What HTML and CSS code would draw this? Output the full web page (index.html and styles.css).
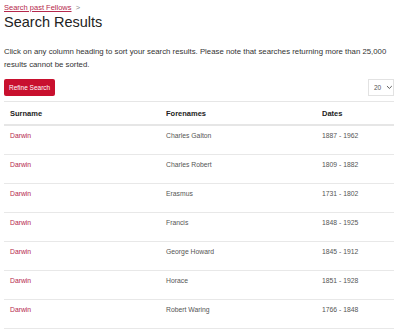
FILE: index.html
```html
<!DOCTYPE html>
<html lang="en">
<head>
    <meta charset="UTF-8">
    <meta name="viewport" content="width=device-width, initial-scale=1.0">
    <title>Search Results</title>
    <link rel="stylesheet" href="styles.css">
</head>
<body>
    <div class="page">
        <nav class="breadcrumb">
            <a href="#">Search past Fellows</a>
            <span class="sep">&gt;</span>
        </nav>
        <h1>Search Results</h1>

        <p class="intro">Click on any column heading to sort your search results. Please note that searches returning more than 25,000 results cannot be sorted.</p>

        <div class="toolbar">
            <button class="refine">Refine Search</button>
            <div class="per-page">
                <span>20</span>
                <svg width="7" height="5" viewBox="0 0 7 5"><path d="M1 1l2.5 2.5L6 1" fill="none" stroke="#555" stroke-width="1"/></svg>
            </div>
        </div>

        <table class="results">
            <thead>
                <tr>
                    <th class="col-surname">Surname</th>
                    <th class="col-forenames">Forenames</th>
                    <th class="col-dates">Dates</th>
                </tr>
            </thead>
            <tbody>
                <tr><td><a href="#">Darwin</a></td><td>Charles Galton</td><td>1887 - 1962</td></tr>
                <tr><td><a href="#">Darwin</a></td><td>Charles Robert</td><td>1809 - 1882</td></tr>
                <tr><td><a href="#">Darwin</a></td><td>Erasmus</td><td>1731 - 1802</td></tr>
                <tr><td><a href="#">Darwin</a></td><td>Francis</td><td>1848 - 1925</td></tr>
                <tr><td><a href="#">Darwin</a></td><td>George Howard</td><td>1845 - 1912</td></tr>
                <tr><td><a href="#">Darwin</a></td><td>Horace</td><td>1851 - 1928</td></tr>
                <tr><td><a href="#">Darwin</a></td><td>Robert Waring</td><td>1766 - 1848</td></tr>
            </tbody>
        </table>
    </div>
</body>
</html>
```

FILE: styles.css
```css
body {
    font-family: 'Liberation Sans', Arial, sans-serif;
    margin: 0;
    padding: 0;
    background: #fff;
    color: #333;
    overflow: hidden;
}

.page {
    padding: 2px 6px 0 4px;
}

.breadcrumb {
    font-size: 7.5px;
    line-height: 11px;
    color: #888;
}

.breadcrumb a {
    color: #b5284c;
    text-decoration: underline;
}

.breadcrumb .sep {
    margin-left: 2px;
}

h1 {
    font-size: 14.5px;
    font-weight: normal;
    color: #222;
    margin: 0;
    line-height: 18px;
}

.intro {
    font-size: 7.8px;
    line-height: 13px;
    margin: 14px 0 0;
    color: #333;
}

.toolbar {
    display: flex;
    justify-content: space-between;
    align-items: center;
    margin-top: 8px;
}

.refine {
    background-color: #c8102e;
    color: #fff;
    border: none;
    border-radius: 2px;
    font-family: inherit;
    font-size: 6.5px;
    height: 17px;
    padding: 0 5px;
    cursor: pointer;
}

.per-page {
    display: flex;
    align-items: center;
    gap: 5px;
    width: 26px;
    height: 17px;
    box-sizing: border-box;
    border: 1px solid #e2e2e2;
    padding-left: 5px;
    font-size: 6.5px;
    color: #555;
}

.results {
    width: 100%;
    border-collapse: collapse;
    margin-top: 5px;
    border-top: 1px solid #e6e6e6;
}

.results th {
    text-align: left;
    font-size: 7.5px;
    font-weight: bold;
    color: #222;
    padding: 7px 6px 6px;
    line-height: 9px;
    border-bottom: 2px solid #e6e6e6;
}

.results td {
    font-size: 6.8px;
    color: #555;
    padding: 6px 6px 14px;
    line-height: 8px;
    border-bottom: 1px solid #e8e8e8;
}

.results td a {
    color: #b5284c;
    text-decoration: none;
}

.col-surname { width: 40%; }
.col-forenames { width: 40%; }
.col-dates { width: 20%; }
```
